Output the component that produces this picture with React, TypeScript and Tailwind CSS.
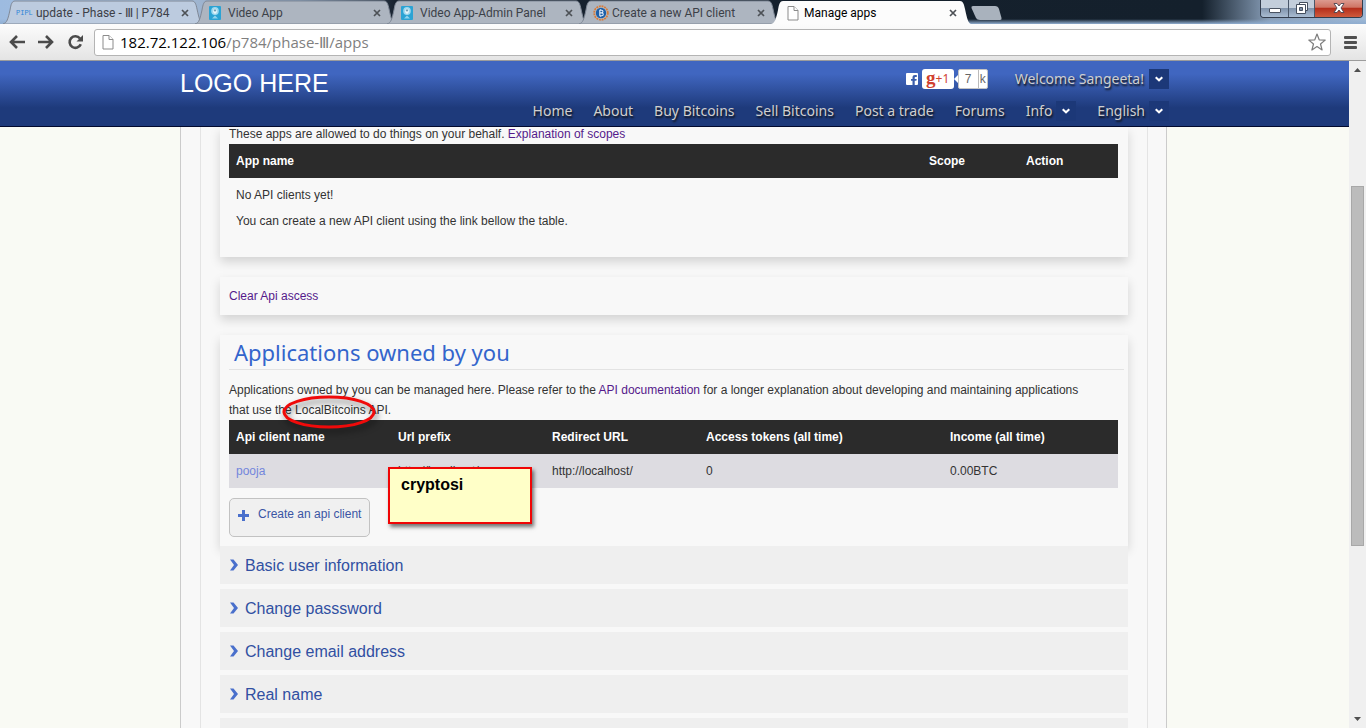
import React from "react";

const ui = "font-['Open_Sans',sans-serif]";
const round = "font-['Noto_Sans','Open_Sans',sans-serif]";

function PageIcon({ className }: { className: string }) {
  return (
    <svg viewBox="0 0 12 15" className={className} fill="#fff" stroke="#8b8b8b" strokeWidth="1">
      <path d="M1 .5h6l4 4V14H1z" />
      <path d="M7 .5v4h4" />
    </svg>
  );
}

function Favicon({ kind }: { kind: string }) {
  if (kind === "pipl")
    return (
      <span className="font-['Liberation_Mono',monospace] text-[7px] leading-4 text-[#2f86d8]">PIPL</span>
    );
  if (kind === "video")
    return (
      <svg viewBox="0 0 12 14" className="h-[14px] w-3">
        <rect width="12" height="14" rx="1" fill="#2ba3d4" />
        <ellipse cx="6" cy="5" rx="3.8" ry="4" fill="#9fd9ef" />
        <ellipse cx="6" cy="5.200" rx="1.8" ry="2.600" fill="#e9f6fb" />
        <circle cx="6" cy="4.400" r="1.100" fill="#6f9db3" />
        <path d="M3 12.5l3-3 3 3z" fill="#8fd4ee" />
      </svg>
    );
  if (kind === "coin")
    return (
      <svg viewBox="0 0 16 16" className="size-4">
        <circle cx="8" cy="8" r="6.8" fill="#b9bcc0" stroke="#d57b3c" strokeWidth="1.8" strokeDasharray="1.9 .8" />
        <circle cx="8" cy="8" r="5.2" fill="#1c5fa8" />
        <path
          d="M6.3 5.2h2.3a1.3 1.3 0 010 2.7H6.6h2.2a1.4 1.4 0 010 2.9H6.3M6.8 5.2v5.6M7.6 4.2v1M7.6 10.8v1"
          fill="none"
          stroke="#e5eefa"
          strokeWidth="1.1"
        />
      </svg>
    );
  return <PageIcon className="h-[15px] w-3" />;
}

function Close() {
  return (
    <svg viewBox="0 0 8 8" className="size-2" stroke="#4d5156" strokeWidth="1.7">
      <path d="M1 1l6 6M7 1L1 7" />
    </svg>
  );
}

const tabs = [
  { title: "update - Phase - Ⅲ | P784", kind: "pipl" },
  { title: "Video App", kind: "video" },
  { title: "Video App-Admin Panel", kind: "video" },
  { title: "Create a new API client", kind: "coin" },
  { title: "Manage apps", kind: "page", active: true },
];

function Tab({ title, kind, active, first }: { title: string; kind: string; active?: boolean; first: boolean }) {
  return (
    <div
      className={`relative -ml-2 flex h-6 w-[200px] shrink-0 items-center pr-[14px] pt-[2px] ${
        active ? "z-10" : ""
      }`}
    >
      <svg viewBox="0 0 200 24" preserveAspectRatio="none" className="absolute inset-0 size-full">
        <path
          d="M0 24C4 23 5 19 7 10 8 4 9 1 12 1H189C192 1 193 4 194 9 196 18 197 23 200 24Z"
          fill={active ? "#fcfcfc" : first ? "#bccbdf" : "#adb5c0"}
          stroke={active ? "none" : "#7f8896"}
          strokeWidth="1"
        />
      </svg>
      <span className={`relative flex shrink-0 ${kind === "pipl" ? "ml-[13px] w-5" : kind === "page" ? "ml-4 w-[17px]" : "ml-[14px] w-[19px]"}`}>
        <Favicon kind={kind} />
      </span>
      <span
        className={`relative min-w-0 grow whitespace-nowrap font-['Roboto','Open_Sans',sans-serif] text-[12px] leading-5 ${
          active ? "text-black" : "text-[#3c4148]"
        }`}
      >
        {title}
      </span>
      <button type="button" aria-label="Close tab" className="relative shrink-0">
        <Close />
      </button>
    </div>
  );
}

function BrowserChrome() {
  return (
    <div className={`shrink-0 ${ui}`}>
      <div className="relative flex h-6 bg-[linear-gradient(to_right,#9dbbe0_0%,#a9c0dc_12%,#7e93ad_22%,#16212e_29%,#14202c_88%,#8aa0ba_93%,#9fb9d6_100%)] pl-[11px]">
        <div className="absolute inset-x-0 bottom-0 h-[5px] bg-[linear-gradient(to_bottom,transparent,#8fadd0)]" />
        {tabs.map((t, i) => (
          <Tab key={i} {...t} first={i === 0} />
        ))}
        <button type="button" aria-label="New tab" className="relative mt-[6px] h-[14px] w-[31px]">
          <svg viewBox="0 0 31 14" className="size-full">
            <path d="M2 0H24Q27 0 28 3L30.500 12Q31 14 29 14H9Q6 14 5 12L.5 2Q0 0 2 0Z" fill="#a9b2bd" />
          </svg>
        </button>
        <div className="relative ml-auto mr-[3px] flex h-[18px] overflow-hidden rounded-b-[4px] border border-t-0 border-[#333d4d]">
          <button type="button" aria-label="Minimize" className="flex w-7 items-center justify-center border-r border-[#4a5769] bg-[linear-gradient(#c3cedb_45%,#8194ac_50%,#a9bcd2)]">
            <span className="mt-1 h-[5px] w-3 rounded-[1px] border border-[#4a5361] bg-white" />
          </button>
          <button type="button" aria-label="Restore" className="flex w-[26px] items-center justify-center border-r border-[#4a5769] bg-[linear-gradient(#c3cedb_45%,#8194ac_50%,#a9bcd2)]">
            <svg viewBox="0 0 12 12" className="mb-[2px] size-3" fill="#fff" stroke="#454f5e">
              <path d="M3.500 .5h8v8h-8z" />
              <path d="M.5 2.500h9v9h-9z" />
              <path d="M3.500 5.500h3v3h-3z" fill="#7d8ea5" />
            </svg>
          </button>
          <button type="button" aria-label="Close window" className="flex w-[47px] items-center justify-center bg-[linear-gradient(#dc9a8f_0%,#cf7565_42%,#b52f1c_50%,#cf5a3c_100%)]">
            <svg viewBox="0 0 12 10" className="mb-[2px] h-[10px] w-3">
              <path d="M1 .5h3L6 3 8 .5h3L8 5l3 4.500H8L6 7 4 9.500H1L4 5z" fill="#fff" stroke="#4c4450" strokeWidth=".9" />
            </svg>
          </button>
        </div>
      </div>
      <div className="flex h-[37px] items-center border-b border-[#9c9c9c] bg-[linear-gradient(#fcfcfc,#e4e4e4)] pl-[9px] pr-[9px]">
        <button type="button" aria-label="Back" className="mr-[13px]">
          <svg viewBox="0 0 16 14" className="h-[14px] w-4" fill="none" stroke="#4b4b4b" strokeWidth="2.600">
            <path d="M2 7h14M8 1L2 7l6 6" />
          </svg>
        </button>
        <button type="button" aria-label="Forward" className="mr-[13px]">
          <svg viewBox="0 0 16 14" className="h-[14px] w-4" fill="none" stroke="#4b4b4b" strokeWidth="2.600">
            <path d="M14 7H0M8 1l6 6-6 6" />
          </svg>
        </button>
        <button type="button" aria-label="Reload" className="mr-[10px]">
          <svg viewBox="0 0 17 16" className="h-4 w-[17px]">
            <path d="M13 4.500A5.800 5.800 0 1013.800 10.300" fill="none" stroke="#4b4b4b" strokeWidth="2.600" />
            <path d="M16 1v6.500H9.500z" fill="#4b4b4b" />
          </svg>
        </button>
        <div className="flex h-[27px] min-w-0 grow items-center rounded-[3px] border border-[#b4b4b4] bg-white pl-[7px] pr-1">
          <PageIcon className="mr-[6px] h-[15px] w-3" />
          <div className="grow text-[15px] leading-5 text-[#7f7f7f]">
            <span className="text-black">182.72.122.106</span>/p784/phase-Ⅲ/apps
          </div>
          <svg viewBox="0 0 18 18" className="size-[18px]" fill="#fff" stroke="#7d7d7d" strokeWidth="1.200" strokeLinejoin="round">
            <path d="M9 1l2.200 5.800 6 .3-4.700 3.900 1.600 6L9 13.600 3.900 17l1.600-6L.8 7.100l6-.3z" />
          </svg>
        </div>
        <button type="button" aria-label="Menu" className="ml-[13px] flex flex-col gap-[2px]">
          <span className="h-[3px] w-[13px] rounded-[1px] bg-[#505050]" />
          <span className="h-[3px] w-[13px] rounded-[1px] bg-[#505050]" />
          <span className="h-[3px] w-[13px] rounded-[1px] bg-[#505050]" />
        </button>
      </div>
    </div>
  );
}

function Drop({ label }: { label: string }) {
  return (
    <button type="button" aria-label={label} className="flex size-5 shrink-0 items-center justify-center bg-[#1c3878]">
      <svg viewBox="0 0 8 6" className="h-[6px] w-2" fill="none" stroke="#fff" strokeWidth="2">
        <path d="M.7 1.200L4 4.300l3.300-3.100" />
      </svg>
    </button>
  );
}

const nav = ["Home", "About", "Buy Bitcoins", "Sell Bitcoins", "Post a trade", "Forums"];

function SiteHeader() {
  return (
    <header className="relative z-10 shrink-0 border-b border-[#020a2e] bg-[linear-gradient(#4066c0_20%,#1e3a7b_72%)]">
      <div className="mx-auto flex h-[65px] max-w-[989px] justify-between">
        <a href="#" className="pt-[7px] text-[25px] leading-[30px] text-white">
          LOGO HERE
        </a>
        <div className={`flex flex-col items-end gap-3 pt-2 text-[14px] leading-5 text-[#cfcfcf] [text-shadow:1px_2px_2px_#111] ${round}`}>
          <div className="flex h-5 items-center">
            <a href="#" aria-label="Facebook" className="mr-1">
              <svg viewBox="0 0 12 12" className="size-3">
                <rect width="12" height="12" rx="1" fill="#fff" />
                <path d="M6.500 12V7.800H5V5.900h1.500V4.500C6.500 2.800 7.500 2 9 2h1.800v1.900H9.600c-.7 0-.9.300-.9.900v1.100h2L10.400 7.800H8.700V12z" fill="#3a5cab" />
              </svg>
            </a>
            <button type="button" className="flex h-5 w-8 items-center justify-center rounded-[3px] bg-white text-[12px] leading-5 text-[#d0402f] [text-shadow:none]">
              <span className="pb-[3px] font-['Liberation_Serif',serif] text-[19px] font-bold leading-4">g</span>+1
            </button>
            <svg viewBox="0 0 4 8" className="h-2 w-1" fill="#fff">
              <path d="M4 0v8L0 4z" />
            </svg>
            <span className="mr-[27px] flex h-5 w-[30px] overflow-hidden rounded-[2px] border border-[#c4c4c4] bg-white text-center font-['Liberation_Sans',sans-serif] text-[12px] leading-[18px] text-[#666] [text-shadow:none]">
              <span className="grow border-r border-[#bbb]">7</span>
              <span className="w-2">k</span>
            </span>
            <span className="mr-[5px]">Welcome Sangeeta!</span>
            <Drop label="Account menu" />
          </div>
          <nav className="flex h-5 gap-[21px]">
            {nav.map((n) => (
              <a key={n} href="#">
                {n}
              </a>
            ))}
            <span className="flex gap-1">
              <a href="#">Info</a>
              <Drop label="Info menu" />
            </span>
            <span className="flex gap-1">
              <a href="#">English</a>
              <Drop label="Language menu" />
            </span>
          </nav>
        </div>
      </div>
    </header>
  );
}

const card = "bg-[#f8f8f8] shadow-[0_5px_10px_rgba(0,0,0,0.15)]";
const th = "h-[34px] px-[7px] text-left font-bold text-white";
const td = "h-[34px] px-[7px]";
const settings = ["Basic user information", "Change passsword", "Change email address", "Real name"];

function Content() {
  return (
    <main className="mx-auto max-w-[989px] pr-[2px] text-[12px] leading-5 text-[#333]">
      <div className="border-x border-[#cbcbcb] bg-[#f8f8f8] pl-[19px] pr-[18px]">
        <div className="border-x border-[#e4e4e4] px-[19px]">
          <section className={`${card} px-[9px] pb-[23px]`}>
            <p className="pb-[3px] leading-[14px]">
              These apps are allowed to do things on your behalf.{" "}
              <a href="#" className="text-[#551a8b]">
                Explanation of scopes
              </a>
            </p>
            <div className="pr-px">
              <table className="w-full table-fixed">
                <thead>
                  <tr className="bg-[#2b2b2b]">
                    <th className={th}>App name</th>
                    <th className={`${th} w-[97px]`}>Scope</th>
                    <th className={`${th} w-[99px]`}>Action</th>
                  </tr>
                </thead>
                <tbody>
                  <tr>
                    <td colSpan={3} className="px-[7px] pt-1 leading-[26px]">
                      <p>No API clients yet!</p>
                      <p>You can create a new API client using the link bellow the table.</p>
                    </td>
                  </tr>
                </tbody>
              </table>
            </div>
          </section>

          <section className={`${card} mt-5 px-[9px] py-[9px]`}>
            <a href="#" className="text-[#551a8b]">
              Clear Api ascess
            </a>
          </section>

          <section className={`${card} relative mt-5 px-[9px] pb-[9px]`}>
            <h2 className={`-mr-[5px] border-b border-[#e3e3e3] pb-[3px] pl-[5px] pt-1 text-[22px] leading-[27px] text-[#3365cc] ${round}`}>
              Applications owned by you
            </h2>
            <p className="pt-[10px]">
              Applications owned by you can be managed here. Please refer to the{" "}
              <a href="#" className="text-[#551a8b]">
                API documentation
              </a>{" "}
              for a longer explanation about developing and maintaining applications
              <br />
              that use the{" "}
              <span className="relative">
                LocalBitcoins
                <svg
                  viewBox="0 0 94 34"
                  className="absolute -left-[13px] -top-[8px] h-[34px] w-[94px] overflow-visible drop-shadow-[2px_4px_3px_rgba(0,0,0,0.5)]"
                >
                  <ellipse cx="47" cy="17" rx="45" ry="15" fill="none" stroke="#f00a0a" strokeWidth="3" />
                </svg>
              </span>{" "}
              API.
            </p>
            <div className="pr-px">
              <table className="w-full table-fixed">
                <thead>
                  <tr className="bg-[#2b2b2b]">
                    <th className={`${th} w-[162px]`}>Api client name</th>
                    <th className={`${th} w-[154px]`}>Url prefix</th>
                    <th className={`${th} w-[154px]`}>Redirect URL</th>
                    <th className={th}>Access tokens (all time)</th>
                    <th className={`${th} w-[175px]`}>Income (all time)</th>
                  </tr>
                </thead>
                <tbody>
                  <tr className="bg-[#dddce1]">
                    <td className={td}>
                      <a href="#" className="text-[#7386dc]">
                        pooja
                      </a>
                    </td>
                    <td className={td}>http://localhost/</td>
                    <td className={td}>http://localhost/</td>
                    <td className={td}>0</td>
                    <td className={td}>0.00BTC</td>
                  </tr>
                </tbody>
              </table>
            </div>
            <button
              type="button"
              className="mt-[10px] flex h-[39px] w-[141px] whitespace-nowrap rounded-[5px] border border-[#c2c2c2] bg-[#f0f0f0] pl-2 pt-[5px] text-[#3a55a4]"
            >
              <svg viewBox="0 0 11 11" className="mr-[9px] mt-[6px] size-[11px]" stroke="#4a70cc" strokeWidth="3">
                <path d="M5.500 0v11M0 5.500h11" />
              </svg>
              Create an api client
            </button>
            <div className="absolute left-[168px] top-[132px] h-[57px] w-36 border-2 border-[#f00505] bg-[#ffffc8] pl-[11px] pt-[6px] text-[16px] font-bold text-black shadow-[2px_3px_4px_rgba(0,0,0,0.55)]">
              cryptosi
            </div>
          </section>

          <div className="relative flex flex-col gap-[5px]">
            {settings.map((s) => (
              <button key={s} type="button" className="flex h-[38px] items-center bg-[#efefef] pl-[10px] pt-[2px] text-left text-[16px] text-[#3150a2]">
                <svg viewBox="0 0 8 12" className="mb-[2px] mr-[7px] h-3 w-2" fill="#4a70cc">
                  <path d="M0 0.500h3.500L8 6 3.500 11.500H0L4 6z" />
                </svg>
                {s}
              </button>
            ))}
            <div className="h-[38px] bg-[#efefef]" />
          </div>
        </div>
      </div>
    </main>
  );
}

function Scrollbar() {
  return (
    <div className="flex w-[17px] shrink-0 flex-col items-center bg-[#f0f0f0]">
      <svg viewBox="0 0 7 4" className="my-[7px] h-1 w-[7px] shrink-0" fill="#505050">
        <path d="M3.500 0L7 4H0z" />
      </svg>
      <div className="flex w-full grow flex-col items-center">
        <div className="h-[17%]" />
        <div className="h-[57%] w-[13px] border border-[#a8a8a8] bg-[#bcbcbc]" />
      </div>
      <svg viewBox="0 0 7 4" className="my-[7px] h-1 w-[7px] shrink-0" fill="#505050">
        <path d="M3.500 4L7 0H0z" />
      </svg>
    </div>
  );
}

export default function App() {
  return (
    <div className="flex h-screen flex-col overflow-hidden font-['Liberation_Sans',Arial,sans-serif]">
      <BrowserChrome />
      <div className="flex min-h-0 grow">
        <div className="flex min-w-0 grow flex-col overflow-hidden bg-[#f9faf4]">
          <SiteHeader />
          <div className="min-h-0 grow overflow-hidden">
            <Content />
          </div>
        </div>
        <Scrollbar />
      </div>
    </div>
  );
}
